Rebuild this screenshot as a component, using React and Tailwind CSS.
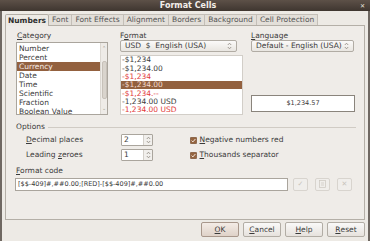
import React from 'react';

const font = { fontFamily: '"DejaVu Sans", Verdana, sans-serif' };

function U({ children }) {
  return <span className="underline underline-offset-[1px]">{children}</span>;
}

function Arrows() {
  return (
    <svg width="5" height="8" viewBox="0 0 5 8" className="shrink-0">
      <path d="M0.8 3 L2.5 1.2 L4.2 3" fill="none" stroke="#8d877f" strokeWidth="0.8" />
      <path d="M0.8 5 L2.5 6.8 L4.2 5" fill="none" stroke="#8d877f" strokeWidth="0.8" />
    </svg>
  );
}

function Dropdown({ text, w }) {
  return (
    <div className={`${w} h-[12px] flex items-center justify-between px-[4px] border border-[#b1aca4] rounded-[2px] bg-gradient-to-b from-[#fbfaf9] to-[#e9e6e1]`}>
      <span className="text-[7.5px] text-[#3a3a3a] leading-none whitespace-pre">{text}</span>
      <Arrows />
    </div>
  );
}

function Spin({ value }) {
  return (
    <div className="flex h-[12px] w-[32px] border border-[#aaa59d] rounded-[1px] bg-white">
      <div className="flex-1 flex items-center pl-[2px] text-[7.5px] leading-none text-[#3a3a3a]">{value}</div>
      <div className="w-[9px] flex items-center justify-center bg-[#f1efec] border-l border-[#d3cfc9]">
        <Arrows />
      </div>
    </div>
  );
}

function Check({ children }) {
  return (
    <div className="flex items-center gap-[2px] h-[12px]">
      <svg width="7" height="7" viewBox="0 0 7 7" className="shrink-0">
        <rect x="0.3" y="0.3" width="6.4" height="6.4" rx="1" fill="#95643f" stroke="#6e4a2f" strokeWidth="0.6" />
        <path d="M1.6 3.6 L2.9 4.9 L5.4 2" fill="none" stroke="#f3e9e0" strokeWidth="1" />
      </svg>
      <span className="text-[7.5px] leading-none text-[#3a3a3a] ml-[0.5px]">{children}</span>
    </div>
  );
}

function SmallBtn({ children }) {
  return (
    <div className="w-[15px] h-[13px] flex items-center justify-center border border-[#d8d4ce] rounded-[2px] bg-[#f0eeeb] text-[7px] leading-none text-[#c9c4bd]">
      {children}
    </div>
  );
}

function Btn({ children, def }) {
  return (
    <div className={`w-[38px] h-[15px] flex items-center justify-center border rounded-[2px] text-[7.5px] leading-none text-[#3a3a3a] ${def ? 'border-[#a8978b] bg-gradient-to-b from-[#f4ece6] to-[#dfd2c8]' : 'border-[#b2ada5] bg-gradient-to-b from-[#faf9f8] to-[#e6e2dd]'}`}>
      {children}
    </div>
  );
}

const tabs = ['Font', 'Font Effects', 'Alignment', 'Borders', 'Background', 'Cell Protection'];
const categories = ['Number', 'Percent', 'Currency', 'Date', 'Time', 'Scientific', 'Fraction', 'Boolean Value'];
const formats = [
  ['-$1,234', false],
  ['-$1,234.00', false],
  ['-$1,234', true],
  ['-$1,234.00', true],
  ['-$1,234.--', true],
  ['-1,234.00 USD', false],
  ['-1,234.00 USD', true],
];

export default function App() {
  return (
    <div style={font} className="w-[370px] h-[241px] overflow-hidden bg-[#6f6862] flex flex-col">
      {/* title bar */}
      <div className="h-[11px] shrink-0 relative flex items-center justify-center bg-gradient-to-b from-[#5d5148] to-[#3f3630]">
        <span className="text-[8px] font-bold text-[#f4efea] leading-none ml-[6px]">Format Cells</span>
        <div className="absolute right-[4px] top-[2px] w-[7px] h-[7px] flex items-center justify-center text-[6px] leading-none text-[#e9e3dd] font-bold">✕</div>
      </div>

      <div className="flex-1 mx-[2px] bg-[#edeae5] flex flex-col px-[3px] pt-[2px]">
        {/* tabs */}
        <div className="flex items-end h-[12px]">
          <div className="h-[12px] px-[2px] flex items-center border border-b-0 border-[#b4afa7] rounded-t-[2px] bg-[#edeae5] relative z-10 translate-y-[1px]">
            <span className="text-[7.5px] font-bold leading-none text-[#2e2e2e]">Numbers</span>
          </div>
          {tabs.map((t) => (
            <div key={t} className="h-[11px] px-[3px] flex items-center border border-b-0 border-l-0 border-[#c4bfb8] bg-[#e3dfd9]">
              <span className="text-[7.5px] leading-none text-[#555]">{t}</span>
            </div>
          ))}
        </div>

        {/* panel */}
        <div className="h-[195px] border border-[#b4afa7] bg-[#efece8] pl-[10px] pr-[8px] pt-[5px] flex flex-col">
          <div className="flex">
            {/* category */}
            <div className="w-[92px]">
              <div className="text-[7.5px] leading-none text-[#3a3a3a] h-[11px] pt-[1px] ml-[1px]"><U>C</U>ategory</div>
              <div className="h-[73px] border border-[#aaa59d] bg-white flex">
                <div className="flex-1 pt-[1px]">
                  {categories.map((c) => (
                    <div key={c} className={`h-[9px] flex items-center pl-[2px] text-[7.5px] leading-none ${c === 'Currency' ? 'bg-[#93613f] text-[#f6eee8]' : 'text-[#3a3a3a]'}`}>{c}</div>
                  ))}
                </div>
                <div className="w-[7px] bg-[#eeebe7] border-l border-[#dcd8d2] flex flex-col items-center">
                  <span className="text-[5px] leading-none text-[#9a948c] mt-[3px]">⌃</span>
                  <div className="w-[5px] h-[38px] mt-[10px] rounded-[2px] bg-[#d9d4cd] border border-[#c7c1b9]" />
                  <span className="text-[5px] leading-none text-[#9a948c] mt-auto mb-[3px]">⌄</span>
                </div>
              </div>
            </div>

            {/* format */}
            <div className="w-[123px] ml-[12px]">
              <div className="text-[7.5px] leading-none text-[#3a3a3a] h-[9px] pt-[1px]">F<U>o</U>rmat</div>
              <Dropdown text="USD  $  English (USA)" w="w-[117px]" />
              <div className="mt-[3px] h-[60px] border border-[#d2cec8] bg-white">
                {formats.map(([f, red], i) => (
                  <div key={i} className={`h-[8.3px] flex items-center pl-[1px] text-[7.5px] leading-none ${i === 3 ? 'bg-[#93613f] text-[#f3dcd2]' : red ? 'text-[#e23a3a]' : 'text-[#3a3a3a]'}`}>{f}</div>
                ))}
              </div>
            </div>

            {/* language */}
            <div className="w-[104px] ml-[8px] flex flex-col">
              <div className="text-[7.5px] leading-none text-[#3a3a3a] h-[9px] pt-[1px]"><U>L</U>anguage</div>
              <Dropdown text="Default - English (USA)" w="w-[103px]" />
              <div className="mt-[43px] h-[17px] border border-[#8a847c] bg-white flex items-center justify-center text-[6.5px] leading-none text-[#3a3a3a]">$1,234.57</div>
            </div>
          </div>

          {/* options */}
          <div className="flex items-center mt-[8px] h-[8px]">
            <span className="text-[7.5px] leading-none text-[#3a3a3a]">Options</span>
            <div className="flex-1 h-px bg-[#d0cbc4] ml-[3px]" />
          </div>
          <div className="flex mt-[3px]">
            <div className="w-[174px] flex flex-col gap-[3px]">
              <div className="flex items-center">
                <span className="w-[105px] pl-[10px] text-[7.5px] leading-none text-[#3a3a3a]"><U>D</U>ecimal places</span>
                <Spin value="2" />
              </div>
              <div className="flex items-center">
                <span className="w-[105px] pl-[10px] text-[7.5px] leading-none text-[#3a3a3a]">Leading <U>z</U>eroes</span>
                <Spin value="1" />
              </div>
            </div>
            <div className="flex flex-col gap-[3px]">
              <Check><U>N</U>egative numbers red</Check>
              <Check><U>T</U>housands separator</Check>
            </div>
          </div>

          <div className="text-[7.5px] leading-none text-[#3a3a3a] mt-[6px]"><U>F</U>ormat code</div>
          <div className="flex items-center mt-[3px] -ml-[1px] gap-[7px]">
            <div className="w-[273px] h-[13px] border border-[#aaa59d] bg-white flex items-center pl-[2px] text-[6.5px] leading-none text-[#3a3a3a] -mr-[2px]">[$$-409]#,##0.00;[RED]-[$$-409]#,##0.00</div>
            <SmallBtn>✓</SmallBtn>
            <SmallBtn>
              <svg width="7" height="8" viewBox="0 0 7 8"><rect x="0.5" y="0.5" width="6" height="7" fill="none" stroke="#cbc6bf" strokeWidth="0.7" /><path d="M2 3h3M2 5h3" stroke="#cbc6bf" strokeWidth="0.7" /></svg>
            </SmallBtn>
            <SmallBtn>✕</SmallBtn>
          </div>
        </div>

        {/* buttons */}
        <div className="flex justify-end gap-[4px] mt-[2px]">
          <Btn def><U>O</U>K</Btn>
          <Btn><U>C</U>ancel</Btn>
          <Btn><U>H</U>elp</Btn>
          <Btn><U>R</U>eset</Btn>
        </div>
      </div>
    </div>
  );
}
